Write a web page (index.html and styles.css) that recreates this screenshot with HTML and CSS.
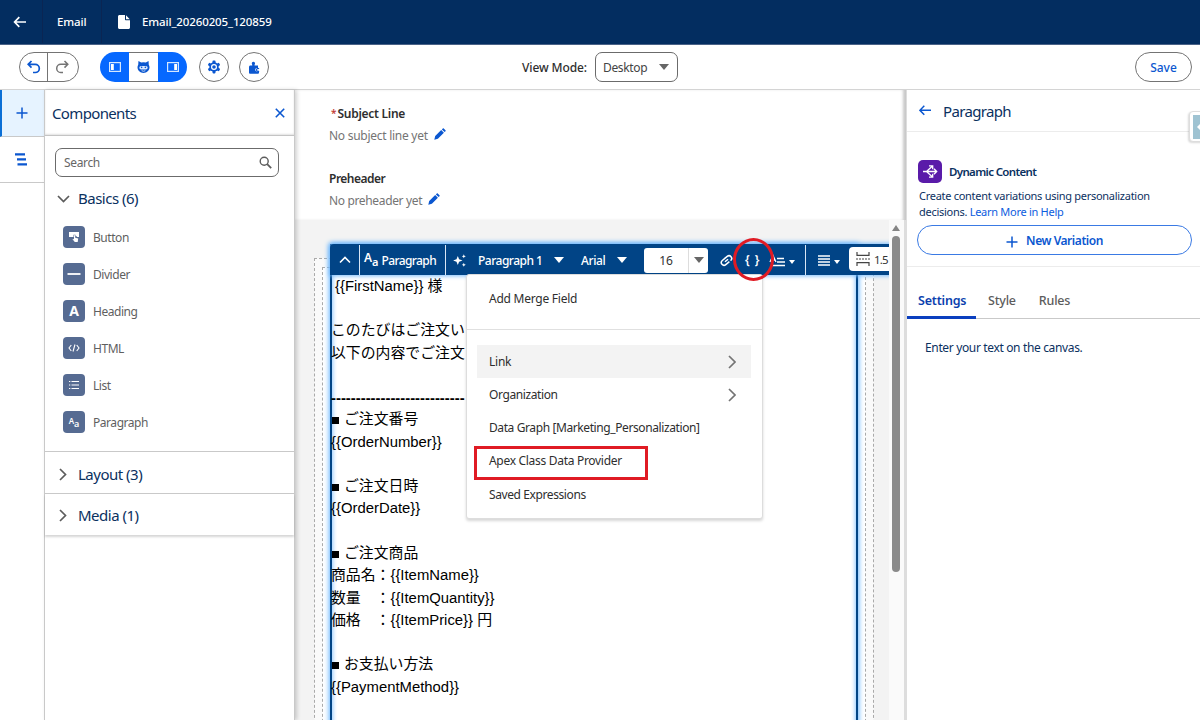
FILE: index.html
```
<!DOCTYPE html>
<html lang="en">
<head>
<meta charset="utf-8">
<title>Email_20260205_120859</title>
<link rel="stylesheet" href="styles.css">
</head>
<body>
<div class="app">
  <header class="topbar">
    <div class="top-back"><svg width="14" height="12" viewBox="0 0 14 12"><path d="M6.3 1.2 1.6 6l4.7 4.8M1.8 6H13" fill="none" stroke="#fff" stroke-width="1.7"/></svg></div>
    <div class="top-type"><span class="t-email">Email</span></div>
    <div class="top-name"><svg width="12" height="14" viewBox="0 0 12 14"><path d="M1.5 0H7v4.2c0 .6.4 1 1 1h4v7.300c0 .8-.7 1.500-1.500 1.500h-9C.7 14 0 13.300 0 12.500v-11C0 .7.7 0 1.500 0zM8 .2 11.800 4.200H8z" fill="#fff"/></svg><span class="t-file">Email_20260205_120859</span></div>
  </header>

  <div class="toolbar">
    <div class="tools">
      <div class="pill undo-redo">
        <span class="half"><svg width="14" height="14" viewBox="0 0 14 14"><path d="M4.500 1 1.200 4.300l3.300 3.300M1.500 4.300h6.700a4 4 0 0 1 0 8.200H6" fill="none" stroke="#0b57d0" stroke-width="1.700"/></svg></span>
        <span class="half"><svg width="14" height="14" viewBox="0 0 14 14"><path d="M9.500 1l3.300 3.300-3.300 3.300M12.500 4.300H5.800a4 4 0 0 0 0 8.200H8" fill="none" stroke="#747474" stroke-width="1.500"/></svg></span>
      </div>
      <div class="pill modes">
        <span class="mode on"><svg width="12" height="10" viewBox="0 0 12 10"><rect x=".6" y=".6" width="10.800" height="8.800" fill="none" stroke="#d5e7ff" stroke-width="1.200"/><rect x="2" y="2" width="2.800" height="6" fill="#fff"/></svg></span>
        <span class="mode"><svg width="13" height="12" viewBox="0 0 14 13"><path d="M1.500 0l3 1.700a8 8 0 0 1 5 0L12.500 0l.2 4a5.200 5.200 0 0 1 .8 2.800C13.500 10.400 10.500 13 7 13S.5 10.400.5 6.800c0-1 .3-2 .8-2.800z" fill="#0b57d0"/><rect x="2.500" y="5.500" width="9" height="3.800" rx="1.900" fill="#dceaff"/><circle cx="5" cy="6.900" r=".9" fill="#0b57d0"/><circle cx="9" cy="6.900" r=".9" fill="#0b57d0"/><path d="M5 10.500q2 1.200 4 0" fill="none" stroke="#fff" stroke-width=".8"/></svg></span>
        <span class="mode on"><svg width="12" height="10" viewBox="0 0 12 10"><rect x=".6" y=".6" width="10.800" height="8.800" fill="none" stroke="#d5e7ff" stroke-width="1.200"/><rect x="7.200" y="2" width="2.800" height="6" fill="#fff"/></svg></span>
      </div>
      <div class="round r-gear"><svg width="14" height="14" viewBox="0 0 14 14"><g fill="#0b57d0"><circle cx="7" cy="7" r="4.700"/><rect x="5.500" y=".6" width="3" height="12.800" rx=".8"/><rect x="5.500" y=".6" width="3" height="12.800" rx=".8" transform="rotate(60 7 7)"/><rect x="5.500" y=".6" width="3" height="12.800" rx=".8" transform="rotate(120 7 7)"/></g><circle cx="7" cy="7" r="2.400" fill="none" stroke="#fff" stroke-width="1.200"/></svg></div>
      <div class="round r-plug"><svg width="12" height="13" viewBox="0 0 12 13"><path d="M4.300 4.500 4 3a1.600 1.600 0 1 1 2.800 0l-.3 1.500H10V7H9a1.800 1.800 0 1 0 0 3.600h2v.9c0 .8-.5 1.300-1.300 1.300H2.300C1.500 12.800 1 12.300 1 11.500V6c0-.9.600-1.500 1.500-1.500z" fill="#0b57d0"/><path d="M11 7.700A1.500 1.500 0 1 0 11 10" fill="none" stroke="#0b57d0" stroke-width="1.200"/></svg></div>
    </div>
    <div class="viewmode"><span class="t-vm">View Mode:</span><div class="select"><span class="t-desk">Desktop</span><i class="caret big"></i></div></div>
    <div class="save"><span class="t-save">Save</span></div>
  </div>

  <div class="main">
    <nav class="rail">
      <div class="rail-tab active"><svg width="12" height="12" viewBox="0 0 12 12"><path d="M6 .5v11M.5 6h11" stroke="#0b57d0" stroke-width="1.500"/></svg></div>
      <div class="rail-tab"><svg width="14" height="13" viewBox="0 0 14 13"><path d="M1 1.300h10M3 6.300h9M3.500 11.300H13" stroke="#0b57d0" stroke-width="2.200"/></svg></div>
    </nav>

    <aside class="components">
      <div class="comp-head"><span class="t-comp">Components</span><svg width="10" height="10" viewBox="0 0 10 10"><path d="M.8.8l8.400 8.400M9.200.8.800 9.200" stroke="#0b57d0" stroke-width="1.600"/></svg></div>
      <div class="search"><span class="t-search">Search</span><svg width="13" height="13" viewBox="0 0 13 13"><circle cx="5.200" cy="5.200" r="4" fill="none" stroke="#5c5c5c" stroke-width="1.400"/><path d="M8.200 8.200l4 4" stroke="#5c5c5c" stroke-width="1.800"/></svg></div>
      <div class="section basics"><svg width="13" height="8" viewBox="0 0 13 8"><path d="M1 1l5.500 5.500L12 1" fill="none" stroke="#5c5c5c" stroke-width="1.700"/></svg><span class="t-basics">Basics (6)</span></div>
      <ul class="items">
        <li><i class="tile"><svg width="12" height="12" viewBox="0 0 12 12"><path d="M1 1h10v5H9V5.500L7.500 5V3.800h-2V6H1z" fill="#fff"/><path d="M6 4.300h1.200v2.500l3 .7-.5 3.500H6.800L4.500 8.300l.7-.6.8.7z" fill="#fff"/></svg></i><span>Button</span></li>
        <li><i class="tile"><svg width="14" height="4" viewBox="0 0 14 4"><path d="M.5 2h13" stroke="#fff" stroke-width="1.800"/></svg></i><span>Divider</span></li>
        <li><i class="tile"><b class="glyph-a">A</b></i><span>Heading</span></li>
        <li><i class="tile"><svg width="12" height="8" viewBox="0 0 12 8"><path d="M3.300 1 1 4l2.300 3M8.700 1 11 4 8.700 7M7 .5 5 7.500" fill="none" stroke="#fff" stroke-width="1.100"/></svg></i><span class="t-html">HTML</span></li>
        <li><i class="tile"><svg width="12" height="10" viewBox="0 0 12 10"><path d="M3.500 1.500H11M3.500 5H11M3.500 8.500H11M1 1.500h1.300M1 5h1.300M1 8.500h1.300" stroke="#fff" stroke-width="1.200"/></svg></i><span>List</span></li>
        <li><i class="tile"><b class="aa small-aa">A<sub>a</sub></b></i><span>Paragraph</span></li>
      </ul>
      <div class="section layout"><svg width="8" height="13" viewBox="0 0 8 13"><path d="M1 1l5.500 5.500L1 12" fill="none" stroke="#5c5c5c" stroke-width="1.700"/></svg><span class="t-layout">Layout (3)</span></div>
      <div class="section media"><svg width="8" height="13" viewBox="0 0 8 13"><path d="M1 1l5.500 5.500L1 12" fill="none" stroke="#5c5c5c" stroke-width="1.700"/></svg><span class="t-media">Media (1)</span></div>
    </aside>

    <section class="canvas">
      <div class="meta">
        <div class="label"><em>*</em><span class="t-subj">Subject Line</span></div>
        <div class="value"><span class="t-nosub">No subject line yet</span><svg width="12" height="12" viewBox="0 0 12 12"><path d="M8.800.5c.3-.3.600-.3.900 0l1.800 1.800c.3.300.3.600 0 .9l-.9.900L7.900 1.400zM7.200 2.100l2.700 2.700-6 6L.3 11.700l.9-3.600z" fill="#0b57d0"/></svg></div>
        <div class="label second"><span class="t-pre">Preheader</span></div>
        <div class="value"><span class="t-nopre">No preheader yet</span><svg width="12" height="12" viewBox="0 0 12 12"><path d="M8.800.5c.3-.3.600-.3.900 0l1.800 1.800c.3.300.3.600 0 .9l-.9.900L7.900 1.400zM7.200 2.100l2.700 2.700-6 6L.3 11.700l.9-3.600z" fill="#0b57d0"/></svg></div>
      </div>
      <div class="stage">
        <div class="viewport">
          <div class="outer"><div class="inner"></div></div>
          <div class="selected">
            <div class="body-text">
              <p class="indent">{{FirstName}} 様</p><p></p>
              <p>このたびはご注文い</p>
              <p>以下の内容でご注文</p><p></p>
              <p class="rule">---------------------------</p>
              <p><i class="sq"></i>ご注文番号</p>
              <p>{{OrderNumber}}</p><p></p>
              <p><i class="sq"></i>ご注文日時</p>
              <p>{{OrderDate}}</p><p></p>
              <p><i class="sq"></i>ご注文商品</p>
              <p>商品名：{{ItemName}}</p>
              <p>数量　：{{ItemQuantity}}</p>
              <p>価格　：{{ItemPrice}} 円</p><p></p>
              <p><i class="sq"></i>お支払い方法</p>
              <p>{{PaymentMethod}}</p>
            </div>
          </div>
          <div class="rte">
            <div class="rte-up"><svg width="12" height="8" viewBox="0 0 12 8"><path d="M1 6.500l5-5 5 5" fill="none" stroke="#fff" stroke-width="1.600"/></svg></div>
            <div class="rte-para"><b class="aa">A<sub>a</sub></b><span class="t-rp">Paragraph</span></div>
            <div class="rte-text">
              <svg class="spark" width="13" height="13" viewBox="0 0 13 13"><path d="M4.800 2l1.300 3.200L9.500 6.500 6.100 7.800 4.800 11 3.500 7.800.1 6.500l3.400-1.300zM10.800.3l.6 1.400 1.400.6-1.400.6-.6 1.400-.6-1.400-1.400-.6 1.400-.6zM10.800 8.800l.6 1.400 1.400.6-1.400.6-.6 1.400-.6-1.400-1.400-.6 1.400-.6z" fill="#fff"/></svg>
              <span class="t-p1">Paragraph 1</span><i class="caret white c1"></i>
              <span class="t-arial">Arial</span><i class="caret white c2"></i>
              <div class="size"><span>16</span><div><i class="caret big"></i></div></div>
              <svg class="link" width="13" height="13" viewBox="0 0 13 13"><g transform="rotate(-40 6.500 6.500)" fill="none" stroke="#fff" stroke-width="1.500"><path d="M8 9.200H3.300A2.700 2.700 0 0 1 3.300 3.800h3.200M5 3.800h4.700a2.700 2.700 0 0 1 0 5.400H9.500M4.500 6.500h4"/></g></svg>
              <span class="braces">{&thinsp;}</span>
              <svg class="hl" width="17" height="13" viewBox="0 0 17 13"><path d="M9 4.500h7M9 8h8M3 11.500h14" stroke="#fff" stroke-width="1.500"/><path d="M2 8 5 1.500 8 8M3 6h4" stroke="#fff" fill="none" stroke-width="1.300"/></svg><i class="caret white tiny"></i>
            </div>
            <div class="rte-end">
              <svg width="12" height="11" viewBox="0 0 12 11"><path d="M0 1h12M0 4h12M0 7h12M0 10h12" stroke="#fff" stroke-width="1.300"/></svg><i class="caret white tiny"></i>
              <div class="lh"><svg width="14" height="14" viewBox="0 0 14 14"><path d="M1 0v3.300h12V0M1 14v-3.300h12V14" fill="none" stroke="#444" stroke-width="1.200"/><path d="M0 7h14" stroke="#444" stroke-dasharray="2 1" stroke-width="1.200"/></svg><span>1.5</span></div>
            </div>
          </div>
        </div>
        <div class="scroll"><i class="arrow"></i><i class="thumb"></i></div>
      </div>
    </section>

    <aside class="props">
      <div class="props-head"><svg width="12" height="11" viewBox="0 0 12 11"><path d="M5.300.8.9 5.300l4.400 4.500M1 5.300h11" fill="none" stroke="#0b57d0" stroke-width="1.500"/></svg><span class="t-ph">Paragraph</span></div>
      <div class="dynamic">
        <div class="dyn-title"><i class="dyn-icon"><svg width="15" height="15" viewBox="0 0 15 15"><path d="M0 7.500h13M3.500 7.500 9 2.500M3.500 7.500 9 12.500M6 1.800h3.700v3.500M6 13.200h3.700V9.700M11 4.800l2.700 2.700L11 10.200" fill="none" stroke="#fff" stroke-width="1.300"/></svg></i><span class="t-dc">Dynamic Content</span></div>
        <div class="desc"><span class="t-d1">Create content variations using personalization</span><br><span class="t-d2">decisions. <a>Learn More in Help</a></span></div>
        <div class="newvar"><svg width="12" height="12" viewBox="0 0 12 12"><path d="M6 .5v11M.5 6h11" stroke="#0b57d0" stroke-width="1.500"/></svg><span class="t-nv">New Variation</span></div>
      </div>
      <div class="tabs"><div class="tab sel"><span class="t-set">Settings</span></div><div class="tab"><span class="t-sty">Style</span></div><div class="tab"><span class="t-rul">Rules</span></div></div>
      <div class="hint"><span class="t-hint">Enter your text on the canvas.</span></div>
    </aside>
  </div>

  <div class="menu">
    <div class="menu-title"><span class="m0">Add Merge Field</span></div>
    <div class="menu-list">
      <div class="mi hover"><span class="m1">Link</span><svg width="8" height="14" viewBox="0 0 8 14"><path d="M1 1l6 6-6 6" fill="none" stroke="#747474" stroke-width="1.700"/></svg></div>
      <div class="mi"><span class="m2">Organization</span><svg width="8" height="14" viewBox="0 0 8 14"><path d="M1 1l6 6-6 6" fill="none" stroke="#747474" stroke-width="1.700"/></svg></div>
      <div class="mi"><span class="m3">Data Graph [Marketing_Personalization]</span></div>
      <div class="mi"><span class="m4">Apex Class Data Provider</span></div>
      <div class="mi"><span class="m5">Saved Expressions</span></div>
    </div>
  </div>
  <div class="mark-circle"></div>
  <div class="mark-box"></div>
  <div class="drawer"><i><svg width="9" height="10" viewBox="0 0 9 10"><path d="M6 0 1 5l5 5h3V0z" fill="#fff"/></svg></i></div>
</div>
</body>
</html>
```
FILE: styles.css
```
* { box-sizing: border-box; }
body { margin: 0; font-family: "Noto Sans", "Noto Sans CJK JP", sans-serif; font-size: 12px; color: #444; }
span { white-space: nowrap; }
svg { display: block; flex: none; }
.app { position: relative; width: 1200px; height: 720px; overflow: hidden; display: flex; flex-direction: column; background: #fff; }

.topbar { height: 45px; flex: none; display: flex; background: #032d60; color: #fff; border-bottom: 1px solid #4a6287; padding-bottom: 1px; }
.top-back { width: 43px; border-right: 1px solid #0a2553; display: flex; align-items: center; padding-left: 13px; }
.top-type { width: 59px; border-right: 1px solid #0a2553; display: flex; align-items: center; padding-left: 14px; }
.top-name { display: flex; align-items: center; padding-left: 16px; gap: 12px; }

.toolbar { height: 45px; flex: none; display: grid; grid-template-columns: 522px 1fr 65px; align-items: center; border-bottom: 1px solid #d4d4d4; }
.tools { display: flex; padding-left: 19px; }
.pill { height: 30px; border-radius: 15px; border: 1px solid #747474; display: flex; overflow: hidden; }
.undo-redo { width: 60px; }
.half { flex: 1; display: flex; align-items: center; justify-content: center; }
.half + .half { border-left: 1px solid #747474; padding-right: 3px; }
.modes { width: 87px; margin-left: 21px; border: 0; }
.mode { flex: 1; display: flex; align-items: center; justify-content: center; border: solid #747474; border-width: 1px 0; }
.mode.on { background: #0668ff; border: 0; }
.round { width: 30px; height: 30px; border-radius: 50%; border: 1px solid #747474; display: flex; align-items: center; justify-content: center; }
.r-gear { margin-left: 12px; }
.r-plug { margin-left: 10px; }
.viewmode { display: flex; align-items: center; }
.t-vm { width: 73px; font-weight: 500; color: #2e2e2e; letter-spacing: -.1px; }
.select { width: 83px; height: 30px; border: 1px solid #6b6b6b; border-radius: 7px; display: flex; align-items: center; justify-content: space-between; padding: 0 8px 0 7px; }
.caret { display: block; flex: none; width: 0; height: 0; border: 5px solid transparent; border-bottom: 0; border-top: 6px solid #666; }
.caret.white { border-top-color: #fff; }
.caret.tiny { border-width: 4px 3px 0; }
.save { width: 57px; height: 30px; border: 1px solid #747474; border-radius: 15px; display: flex; align-items: center; justify-content: center; color: #0b57d0; font-weight: 500; }

.main { flex: 1; display: flex; min-height: 0; }
.rail { width: 44px; flex: none; }
.rail-tab { height: 46px; display: flex; align-items: center; justify-content: center; border-bottom: 1px solid #c9c9c9; padding-right: 3px; }
.rail-tab.active { height: 47px; background: #e6f3ff; border-left: 2px solid #0b6fd6; padding-right: 2px; }
.components { width: 251px; flex: none; border: solid #c9c9c9; border-width: 0 1px; z-index: 1; box-shadow: 2px 0 4px rgba(0,0,0,.18); background: #fff; }
.comp-head { height: 46px; border-bottom: 1px solid #c4c4c4; box-shadow: 0 -1px 2px rgba(0,0,0,.12) inset; display: flex; align-items: center; justify-content: space-between; padding: 0 9px 0 7px; color: #0b315f; }
.search { margin: 12px 15px 0 10px; height: 29px; border: 1px solid #6b6b6b; border-radius: 7px; display: flex; align-items: center; justify-content: space-between; padding: 0 6px 0 8px; color: #666; }
.section { display: flex; align-items: center; color: #0b315f; }
.section svg { margin: 2px 8px 0 12px; }
.basics { height: 41px; }
.layout svg, .media svg { margin: 1px 11px 0 14px; }
.items { list-style: none; margin: 0; padding: 0 0 0 18px; height: 234px; border-bottom: 1px solid #c9c9c9; color: #5f5f5f; }
.items li { height: 37.1px; display: flex; align-items: center; gap: 8px; }
.items span { padding-top: 1px; letter-spacing: -.45px; }
.tile { width: 22px; height: 22px; border-radius: 4px; background: #566b92; color: #fff; font-style: normal; display: flex; align-items: center; justify-content: center; }
.glyph-a { font-size: 14px; font-weight: 700; line-height: 20px; }
.aa { font-weight: 600; font-size: 12px; display: flex; line-height: 14px; padding-bottom: 4px; }
.aa sub { font-size: 11px; vertical-align: baseline; padding-top: 4px; line-height: 14px; margin-bottom: -4px; }
.small-aa { font-size: 8px; line-height: 10px; padding-bottom: 3px; }
.small-aa sub { font-size: 9px; line-height: 10px; padding-top: 3px; margin-bottom: -3px; }
.layout { height: 42px; border-bottom: 1px solid #c9c9c9; padding-top: 2px; }
.media { height: 41px; box-shadow: 0 2px 2px rgba(0,0,0,.16); }

.canvas { width: 611px; flex: none; display: flex; flex-direction: column; }
.meta { height: 130px; flex: none; padding: 14px 0 0 34px; color: #747474; box-shadow: inset -4px 0 3px -1px rgba(0,0,0,.22); }
.label { height: 18px; display: flex; align-items: center; color: #2e2e2e; font-weight: 600; }
.label em { color: #c23934; font-style: normal; width: 8.500px; padding-left: 2px; font-size: 10px; }
.label.second { margin-top: 21px; }
.value { height: 26px; display: flex; align-items: center; gap: 6px; }
.value svg { margin-top: -3px; }
.stage { flex: 1; display: flex; min-height: 0; }
.viewport { position: relative; width: 594px; background: #f3f3f3; overflow: hidden; padding: 38px 0 0 19px; }
.outer { width: 560px; height: 480px; border: 1px dashed #aaa; background: #fafafa; padding: 8px 7px 0; }
.inner { height: 480px; border: 1px dashed #aaa; background: #fff; }
.selected { position: absolute; left: 35px; top: 24px; width: 528px; height: 500px; border: 2px solid #014486; background: #fff; box-shadow: 0 0 5px 1px #66b5ff, inset 0 0 4px 1px #8ec8ff; }
.body-text { padding-top: 28.800px; font: 14.86px/22.28px "Liberation Sans", "Noto Sans CJK JP", sans-serif; color: #000; margin-left: -1px; }
.body-text p { margin: 0; height: 22.28px; white-space: nowrap; }
.body-text .indent { padding-left: 4px; }
.body-text .rule { font-weight: 700; line-height: 24.300px; }
.sq { display: inline-block; width: 7px; height: 7px; background: #000; margin: 0 5px 0 1px; }
.rte { position: absolute; left: 35px; top: 24px; width: 600px; height: 31px; padding-top: 1px; background: #014486; border-radius: 4px 0 0 0; display: flex; color: #fff; font-weight: 500; box-shadow: 0 0 4px 1px #78bcfb; }
.rte > div { flex: none; }
.rte-up { width: 30px; border-right: 1px solid #d8e6f5; display: flex; align-items: center; justify-content: center; }
.rte-para { width: 86px; border-right: 1px solid #d8e6f5; display: flex; align-items: center; padding-left: 4px; gap: 3px; }
.rte-text { width: 360px; border-right: 1px solid #d8e6f5; display: flex; align-items: center; }
.rte-text > * { flex: none; }
.spark { margin-left: 7px; }
.t-p1 { width: 76px; margin-left: 12px; letter-spacing: -.5px; }
.t-rp { letter-spacing: -.6px; }
.t-arial { width: 36px; margin-left: 17px; letter-spacing: -.4px; }
.size { width: 64px; height: 25px; margin-left: 17px; border-radius: 3px; background: #fff; color: #333; display: flex; font-weight: 400; }
.size span { width: 44px; text-align: center; line-height: 25px; }
.size div { flex: 1; border-left: 1px solid #ddd; display: flex; align-items: center; justify-content: center; }
.link { margin-left: 12px; }
.braces { width: 26px; margin-left: 7px; padding-bottom: 2px; text-align: center; font-weight: 600; font-size: 12px; letter-spacing: 1.500px; }
.hl { margin-left: 2px; }
.hl + .caret { margin: 3px 0 0 4px; }
.rte-end { display: flex; align-items: center; padding-left: 12px; }
.rte-end > .caret { margin: 3px 9px 0 4px; }
.lh { width: 60px; height: 24px; margin-top: -2px; border-radius: 4px; background: #fff; color: #333; display: flex; align-items: center; gap: 4px; padding-left: 7px; font-weight: 400; font-size: 11.500px; letter-spacing: -.8px; }
.scroll { width: 17px; background: #fafafa; display: flex; flex-direction: column; align-items: center; padding: 5px 2px 0 0; border-right: 2px solid #ddd; }
.arrow { border: 4px solid transparent; border-top: 0; border-bottom: 6px solid #858585; }
.thumb { width: 8px; height: 336px; border-radius: 4px; background: #8a8a8a; margin-top: 5px; }

.props { flex: 1; background: #fff; color: #0b315f; border-left: 1px solid #ddd; }
.props-head { height: 42px; border-bottom: 1px solid #ececec; display: flex; align-items: center; padding-left: 12px; gap: 12px; }
.dynamic { height: 135px; border-bottom: 1px solid #ececec; padding: 27px 8px 0 10px; }
.dyn-title { display: flex; align-items: center; gap: 7px; height: 25px; padding-left: 1px; font-weight: 600; }
.dyn-icon { width: 24px; height: 23px; border-radius: 5px; background: #5a1ba9; display: flex; align-items: center; justify-content: center; }
.desc { padding: 4px 0 0 2px; line-height: 16px; height: 41px; font-size: 11px; letter-spacing: -.28px; }
.desc a { color: #0b5cde; }
.newvar { height: 30px; border: 1px solid #3a7ae4; border-radius: 15px; color: #0b57d0; font-weight: 600; display: flex; align-items: center; justify-content: center; gap: 8px; }
.newvar svg { margin-top: 3px; }
.tabs { height: 52px; border-bottom: 1px solid #c9c9c9; display: flex; padding-top: 16px; color: #5c5c5c; }
.tab { height: 36px; padding: 9px 11px 0 12px; font-weight: 500; }
.tab.sel { width: 69px; padding-left: 11px; color: #0b3fae; border-bottom: 3px solid #0b3fbf; font-weight: 600; }
.hint { padding: 20px 0 0 18px; }

.menu { position: absolute; left: 466px; top: 274px; width: 297px; height: 245px; background: #fff; border: 1px solid #ddd; border-radius: 3px; box-shadow: 0 2px 3px rgba(0,0,0,.16); color: #2e2e2e; }
.menu-title { height: 55px; border-bottom: 1px solid #e0e0e0; padding: 15px 0 0 22px; }
.menu-list { padding: 15px 11px 0 10px; }
.mi { height: 33.150px; display: flex; align-items: center; justify-content: space-between; padding: 0 15px 0 12px; }
.mi svg { margin-top: 1px; }
.mi.hover { background: #f3f3f3; }
.mark-circle { position: absolute; left: 733px; top: 238px; width: 41px; height: 43px; border: 3px solid #e01b24; border-radius: 50%; }
.mark-box { position: absolute; left: 474px; top: 446px; width: 174px; height: 34px; border: 3px solid #e01b24; }
.drawer { position: absolute; left: 1189px; top: 111px; width: 20px; height: 31px; border: 1px solid #ddd; border-radius: 4px; background: #fff; box-shadow: -1px 1px 2px rgba(0,0,0,.15); padding: 3px 0 0 3px; }
.drawer i { display: flex; align-items: center; padding-left: 3px; width: 12px; height: 24px; background: #9fc3d2; }

.t-email, .t-file { font-weight: 500; font-size: 11.5px; letter-spacing: -.12px; }
.t-comp, .t-basics, .t-layout, .t-media, .t-ph { font-size: 15px; letter-spacing: -.5px; }
.t-comp, .t-ph { letter-spacing: -.65px; }
.t-search, .t-desk { letter-spacing: -.35px; }
.t-subj, .t-nosub { letter-spacing: -.27px; }
.t-nopre { letter-spacing: -.35px; }
.t-pre { letter-spacing: -.5px; }
.t-dc { font-size: 11.500px; letter-spacing: -.65px; }
.t-nv { letter-spacing: -.45px; }
.t-hint { letter-spacing: -.35px; }
.t-set, .t-sty, .t-rul { font-size: 12.500px; letter-spacing: -.2px; }
.m0, .m1 { letter-spacing: -.25px; }
.m2, .m5 { letter-spacing: -.4px; }
.m3 { letter-spacing: -.4px; }
.m4 { letter-spacing: -.3px; }
```
